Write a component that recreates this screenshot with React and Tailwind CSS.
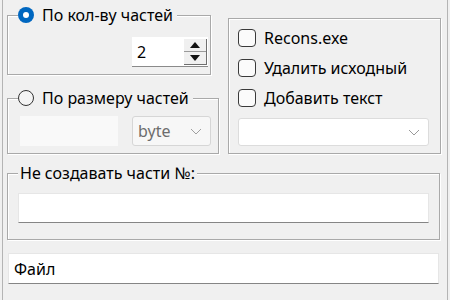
import React from 'react';

function Chevron({ className }) {
  return (
    <svg width="12" height="7" viewBox="0 0 12 7" className={className}>
      <polyline points="1,1 6,6 11,1" fill="none" stroke="currentColor" strokeWidth="1" />
    </svg>
  );
}

function Spinner({ value }) {
  return (
    <div className="mt-[12px] ml-[124px] w-[76px] h-[30px] bg-white border-b border-[#8a8a8a] flex items-center">
      <span className="flex-1 pl-[5px] leading-none">{value}</span>
      <div className="w-[23px] h-[26px] mr-[1px] flex flex-col bg-[#f0f0f0] border-r border-b border-[#6f6f6f]">
        <div className="flex-1 flex items-center justify-center border-b border-[#9a9a9a]">
          <svg width="10" height="6" viewBox="0 0 10 6">
            <polygon points="5,0 10,6 0,6" fill="#111" />
          </svg>
        </div>
        <div className="flex-1 flex items-center justify-center">
          <svg width="10" height="6" viewBox="0 0 10 6">
            <polygon points="0,0 10,0 5,6" fill="#111" />
          </svg>
        </div>
      </div>
    </div>
  );
}

function Checkbox({ label }) {
  return (
    <div className="h-[30px] flex items-center gap-[8px]">
      <span className="w-[18px] h-[18px] rounded-[4px] border border-[#3a3a3a] bg-[#fbfbfb]" />
      <span className="leading-none">{label}</span>
    </div>
  );
}

export default function App() {
  return (
    <div className="w-[450px] h-[300px] overflow-hidden bg-[#f0f0f0] font-['Noto_Sans',sans-serif] text-[16px] text-black">
      <div className="ml-[2px] w-[446px] h-full border-l border-r border-[#b4b4b4] px-[4px]">
        <div className="flex items-start">
          <div className="flex flex-col w-[212px]">
            <fieldset className="mt-[5px] w-[204px] h-[70px] border border-[#a9a9a9] shadow-[inset_1px_1px_0_#fff,1px_1px_0_#fff]">
              <legend className="ml-[10px] pr-[4px] bg-[#f0f0f0] flex items-center gap-[8px] h-[20px]">
                <span className="w-[16px] h-[16px] rounded-full bg-[#0067c0] flex items-center justify-center">
                  <span className="w-[6px] h-[6px] rounded-full bg-white" />
                </span>
                <span className="leading-none">По кол-ву частей</span>
              </legend>
              <Spinner value="2" />
            </fieldset>

            <fieldset className="mt-[13px] w-[212px] h-[66px] border border-[#a9a9a9] shadow-[inset_1px_1px_0_#fff,1px_1px_0_#fff]">
              <legend className="ml-[10px] pr-[4px] bg-[#f0f0f0] flex items-center gap-[8px] h-[20px]">
                <span className="w-[16px] h-[16px] rounded-full border-[1.5px] border-[#333] bg-[#f4f4f4]" />
                <span className="leading-none">По размеру частей</span>
              </legend>
              <div className="mt-[8px] flex items-center">
                <div className="ml-[12px] w-[98px] h-[30px] bg-[#f9f9f9]" />
                <div className="ml-[14px] w-[79px] h-[30px] bg-[#f7f7f7] border border-[#d6d6d6] rounded-[3px] flex items-center pl-[5px] pr-[8px] text-[#6d6d6d]">
                  <span className="flex-1 leading-none">byte</span>
                  <Chevron className="text-[#a0a0a0]" />
                </div>
              </div>
            </fieldset>
          </div>

          <div className="ml-[9px] mt-[18px] w-[213px] h-[136px] border border-[#a9a9a9] shadow-[inset_1px_1px_0_#fff,1px_1px_0_#fff] pl-[9px] pt-[4px]">
            <Checkbox label="Recons.exe" />
            <Checkbox label="Удалить исходный" />
            <Checkbox label="Добавить текст" />
            <div className="mt-[5px] w-[191px] h-[28px] bg-white border border-[#dcdcdc] rounded-[3px] flex items-center justify-end pr-[8px]">
              <Chevron className="text-[#9a9a9a]" />
            </div>
          </div>
        </div>

        <fieldset className="mt-[9px] w-[433px] h-[77px] border border-[#a9a9a9] shadow-[inset_1px_1px_0_#fff,1px_1px_0_#fff]">
          <legend className="ml-[10px] px-[2px] bg-[#f0f0f0] h-[20px] flex items-center">
            <span className="leading-none">Не создавать части №:</span>
          </legend>
          <div className="mt-[10px] ml-[10px] w-[411px] h-[30px] bg-white border border-[#e6e6e6] border-b-[#858585]" />
        </fieldset>

        <div className="mt-[13px] ml-[1px] w-[431px] h-[31px] bg-white border border-[#e6e6e6] border-b-[#858585] flex items-center pl-[5px]">
          <span className="leading-none">Файл</span>
        </div>
      </div>
    </div>
  );
}
